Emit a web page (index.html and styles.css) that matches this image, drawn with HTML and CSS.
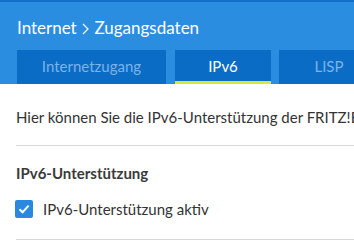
FILE: index.html
```html
<!DOCTYPE html>
<html lang="de">
<head>
	<meta charset="UTF-8">
	<title>Zugangsdaten</title>
	<link rel="stylesheet" href="styles.css">
</head>
<body>
	<div class="head">
		<div class="title">Internet <svg class="sep" width="7" height="12" viewBox="0 0 7 12"><path d="M1 1 L6 6 L1 11" fill="none" stroke="#fff" stroke-width="1.2"/></svg> Zugangsdaten</div>
		<div class="tabs">
			<div class="tab">Internetzugang</div>
			<div class="tab active">IPv6</div>
			<div class="tab">LISP</div>
		</div>
	</div>
	<div class="content">
		<p class="intro">Hier können Sie die IPv6-Unterstützung der FRITZ!Box aktivieren.</p>
		<h3 class="sub">IPv6-Unterstützung</h3>
		<label class="check">
			<span class="box">
				<svg width="12" height="10" viewBox="0 0 12 10"><path d="M1.5 5.2 L4.6 8.2 L10.6 1.6" fill="none" stroke="#fff" stroke-width="2"/></svg>
			</span>
			IPv6-Unterstützung aktiv
		</label>
	</div>
</body>
</html>
```

FILE: styles.css
```css
body{
	margin: 0; font-family: Lato, "Open Sans", sans-serif; background: #fff; overflow: hidden; width: 354px;
}
.head{
	background: #2b8de0; border-top: 2px solid #1270c8; padding: 16px 0 0 17px; height: 66px;
}
.title{
	color: #fff; font-size: 17px; line-height: 20px; white-space: nowrap;
}
.sep{
	margin: 0 1px; vertical-align: -1px;
}
.tabs{
	display: flex; gap: 8px; margin-top: 12px; white-space: nowrap;
}
.tab{
	background: #0a6cc5; color: #7cb3e8; font-size: 15px; height: 34px; line-height: 32px; text-align: center; box-sizing: border-box; flex: none;
}
.tab:nth-child(1){width: 149px;}
.tab:nth-child(2){width: 96px; margin-left: 1px;}
.tab:nth-child(3){width: 100px;}
.tab.active{
	color: #fff; border-bottom: 3px solid #d9e43c;
}
.content{
	padding: 0 0 0 16px; color: #333;
}
.intro{
	margin: 0; padding: 23px 0 18px; font-size: 15px; line-height: 20px; white-space: nowrap; border-bottom: 1px solid #d9d9d9;
}
.sub{
	margin: 0; padding-top: 18px; font-size: 15px; line-height: 18px; font-weight: bold; color: #3a3a3a;
}
.check{
	display: flex; align-items: center; gap: 10px; font-size: 15px; padding: 18px 0 21px; border-bottom: 1px solid #d9d9d9;
}
.box{
	width: 18px; height: 18px; border-radius: 2px; background: #2b88df; display: flex; align-items: center; justify-content: center; margin-left: -1px;
}
```
